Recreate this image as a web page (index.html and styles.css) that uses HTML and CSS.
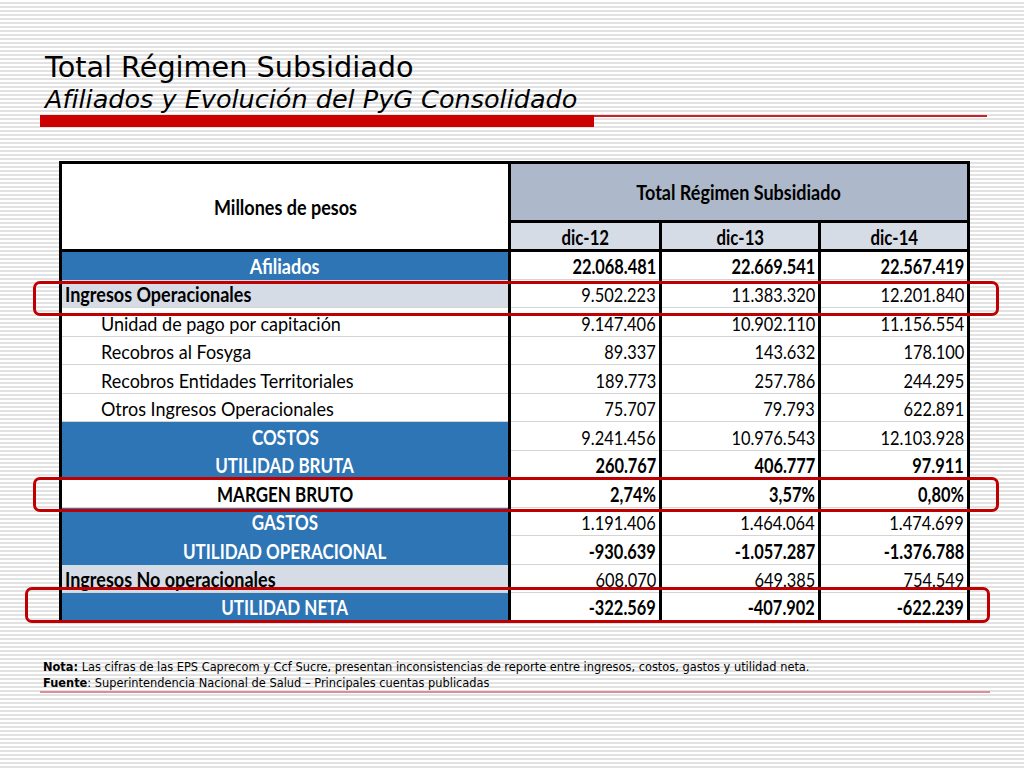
FILE: index.html
```html
<!DOCTYPE html>
<html lang="es">
<head>
<meta charset="utf-8">
<title>Total Régimen Subsidiado</title>
<link rel="stylesheet" href="styles.css">
</head>
<body>
<div class="slide">
  <header class="head">
    <h1 class="title">Total Régimen Subsidiado</h1>
    <h2 class="subtitle">Afiliados y Evolución del PyG Consolidado</h2>
  </header>
  <div class="rule"><div class="rule-thick"></div><div class="rule-thin"></div></div>

  <div class="table-wrap">
    <table class="pyg">
      <colgroup>
        <col class="c-label"><col class="c-12"><col class="c-13"><col class="c-14">
      </colgroup>
      <thead>
        <tr class="hr1">
          <th rowspan="2" class="corner ctr"><span>Millones de pesos</span></th>
          <th colspan="3" class="group ctr"><span>Total Régimen Subsidiado</span></th>
        </tr>
        <tr class="hr2">
          <th class="year ctr"><span>dic-12</span></th>
          <th class="year ctr"><span>dic-13</span></th>
          <th class="year ctr"><span>dic-14</span></th>
        </tr>
      </thead>
      <tbody>
        <tr class="row bold">
          <td class="lab blue ctr"><span>Afiliados</span></td>
          <td class="num"><span>22.068.481</span></td><td class="num"><span>22.669.541</span></td><td class="num"><span>22.567.419</span></td>
        </tr>
        <tr class="row">
          <td class="lab light lft"><span>Ingresos Operacionales</span></td>
          <td class="num"><span>9.502.223</span></td><td class="num"><span>11.383.320</span></td><td class="num"><span>12.201.840</span></td>
        </tr>
        <tr class="row">
          <td class="lab sub lft"><span>Unidad de pago por capitación</span></td>
          <td class="num"><span>9.147.406</span></td><td class="num"><span>10.902.110</span></td><td class="num"><span>11.156.554</span></td>
        </tr>
        <tr class="row">
          <td class="lab sub lft"><span>Recobros al Fosyga</span></td>
          <td class="num"><span>89.337</span></td><td class="num"><span>143.632</span></td><td class="num"><span>178.100</span></td>
        </tr>
        <tr class="row">
          <td class="lab sub lft"><span>Recobros Entidades Territoriales</span></td>
          <td class="num"><span>189.773</span></td><td class="num"><span>257.786</span></td><td class="num"><span>244.295</span></td>
        </tr>
        <tr class="row">
          <td class="lab sub lft"><span>Otros Ingresos Operacionales</span></td>
          <td class="num"><span>75.707</span></td><td class="num"><span>79.793</span></td><td class="num"><span>622.891</span></td>
        </tr>
        <tr class="row">
          <td class="lab blue caps ctr"><span>COSTOS</span></td>
          <td class="num"><span>9.241.456</span></td><td class="num"><span>10.976.543</span></td><td class="num"><span>12.103.928</span></td>
        </tr>
        <tr class="row bold">
          <td class="lab blue caps ctr"><span>UTILIDAD BRUTA</span></td>
          <td class="num"><span>260.767</span></td><td class="num"><span>406.777</span></td><td class="num"><span>97.911</span></td>
        </tr>
        <tr class="row bold">
          <td class="lab plain caps ctr"><span>MARGEN BRUTO</span></td>
          <td class="num"><span>2,74%</span></td><td class="num"><span>3,57%</span></td><td class="num"><span>0,80%</span></td>
        </tr>
        <tr class="row">
          <td class="lab blue caps ctr"><span>GASTOS</span></td>
          <td class="num"><span>1.191.406</span></td><td class="num"><span>1.464.064</span></td><td class="num"><span>1.474.699</span></td>
        </tr>
        <tr class="row bold">
          <td class="lab blue caps ctr"><span>UTILIDAD OPERACIONAL</span></td>
          <td class="num"><span>-930.639</span></td><td class="num"><span>-1.057.287</span></td><td class="num"><span>-1.376.788</span></td>
        </tr>
        <tr class="row">
          <td class="lab light lft"><span>Ingresos No operacionales</span></td>
          <td class="num"><span>608.070</span></td><td class="num"><span>649.385</span></td><td class="num"><span>754.549</span></td>
        </tr>
        <tr class="row bold last">
          <td class="lab blue caps ctr"><span>UTILIDAD NETA</span></td>
          <td class="num"><span>-322.569</span></td><td class="num"><span>-407.902</span></td><td class="num"><span>-622.239</span></td>
        </tr>
      </tbody>
    </table>
    <div class="mark mark-ingresos"></div>
    <div class="mark mark-margen"></div>
    <div class="mark mark-neta"></div>
  </div>

  <div class="notes">
    <p><b>Nota:</b> Las cifras de las EPS Caprecom y Ccf Sucre, presentan inconsistencias de reporte entre ingresos, costos, gastos y utilidad neta.</p>
    <p><b>Fuente</b>: Superintendencia Nacional de Salud – Principales cuentas publicadas</p>
  </div>
  <div class="foot-rule"></div>
</div>
</body>
</html>
```

FILE: styles.css
```css
html, body {
  margin: 0;
  padding: 0;
}
body {
  width: 1024px;
  height: 768px;
  overflow: hidden;
  background: repeating-linear-gradient(to bottom, #ffffff 0, #ffffff 2px, #e2e2e2 2px, #e2e2e2 4px);
  font-family: "DejaVu Sans", Verdana, sans-serif;
  color: #000;
}
.slide {
  display: flex;
  flex-direction: column;
}
.head {
  padding: 51px 0 0 45px;
}
.title {
  margin: 0;
  font-weight: normal;
  font-size: 28.7px;
  line-height: 33px;
  white-space: nowrap;
}
.subtitle {
  margin: 0;
  font-weight: normal;
  font-style: italic;
  font-size: 25.5px;
  line-height: 31px;
  white-space: nowrap;
}
.rule {
  display: flex;
  align-items: flex-start;
  margin-left: 40px;
  height: 13px;
}
.rule-thick {
  width: 554px;
  height: 12px;
  background: #cc0000;
}
.rule-thin {
  width: 393px;
  height: 2px;
  background: #c8202a;
}

/* table */
.table-wrap {
  position: relative;
  margin: 33px 0 0 59px;
  width: 908px;
}
.pyg {
  border-collapse: collapse;
  width: 908px;
  table-layout: fixed;
  font-family: Lato, "Liberation Sans", sans-serif;
  font-size: 20px;
  color: #000;
  background: #fff;
}
.c-label { width: 449px; }
.c-12 { width: 151px; }
.c-13 { width: 159px; }
.c-14 { width: 149px; }
.pyg th, .pyg td {
  padding: 0 3px;
  white-space: nowrap;
  overflow: hidden;
}
.pyg span {
  display: inline-block;
  transform: scaleX(0.9);
}
.ctr { text-align: center; }
.lft { text-align: left; }
.lft span { transform-origin: left center; }
.ctr span { transform-origin: center center; }
.pyg .caps span { transform: scaleX(0.85); }

.hr1 { height: 59px; }
.hr2 { height: 29px; }
.pyg th {
  font-weight: bold;
  border: 3px solid #000;
}
.corner {
  background: #fff;
  vertical-align: middle;
  padding-top: 4px;
}
.group {
  background: #adb9ca;
  vertical-align: middle;
}
.year {
  background: #d6dce5;
  vertical-align: bottom;
  padding-bottom: 1px;
  line-height: 24px;
}
.pyg .year span { transform: scaleX(0.84); }

.row { height: 28.5px; }
.pyg td {
  vertical-align: bottom;
  line-height: 24px;
  padding-bottom: 1px;
  border-bottom: 1px solid #d4d4d4;
}
.pyg td + td { border-left: 3px solid #000; }
.pyg td:last-child { border-right: 3px solid #000; }
.pyg td.lab { border-left: 3px solid #000; }
.row.last td { border-bottom: 3px solid #000; }

.num {
  text-align: right;
  background: #fff;
  padding-right: 2px;
}
.pyg .num span {
  transform: scaleX(0.82);
  transform-origin: right center;
}
.bold td { font-weight: bold; }

.lab.blue {
  background: #2e75b6;
  color: #fff;
  font-weight: bold;
  border-bottom-color: #2e75b6;
}
.lab.light {
  background: #d6dce5;
  font-weight: bold;
  padding-left: 3px;
}
.lab.sub {
  background: #fff;
  font-weight: normal;
  padding-left: 39px;
}
.lab.plain {
  background: #fff;
  font-weight: bold;
}

/* red highlight frames */
.mark {
  position: absolute;
  border: 3px solid #c00000;
  border-radius: 7px;
  box-sizing: border-box;
}
.mark-ingresos { left: -26px; top: 120px; width: 966px; height: 35px; }
.mark-margen   { left: -26px; top: 316px; width: 966px; height: 35px; }
.mark-neta     { left: -34px; top: 426px; width: 965px; height: 36px; }

/* notes */
.notes {
  margin: 35px 0 0 43px;
  font-size: 11.4px;
}
.notes p {
  margin: 0;
  white-space: nowrap;
  line-height: 18px;
}
.notes p + p {
  line-height: 15px;
}
.foot-rule {
  margin: 0 0 0 40px;
  width: 950px;
  height: 2px;
  background: #d98f97;
}
```
